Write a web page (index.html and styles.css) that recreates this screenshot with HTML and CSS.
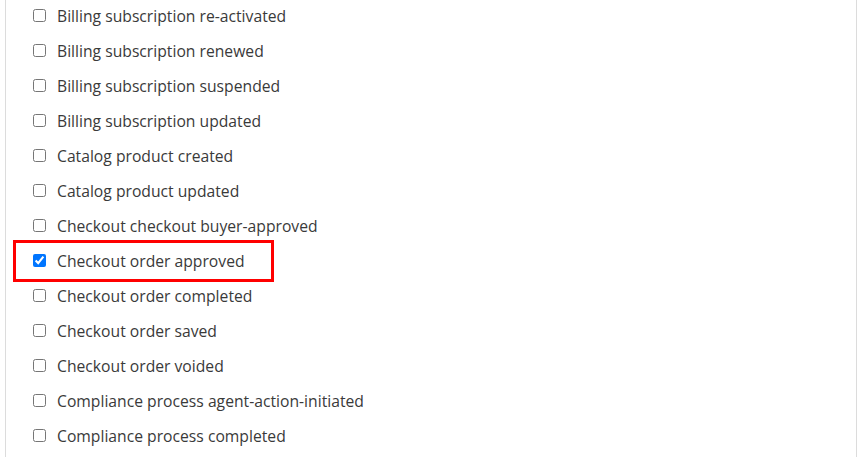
FILE: index.html
```html
<!DOCTYPE html>
<html>
<head>
<meta charset="utf-8">
<link rel="stylesheet" href="styles.css">
</head>
<body>
<div class="panel">
  <ul class="events">
    <li class="event"><label class="opt"><input type="checkbox"><span>Billing subscription re-activated</span></label></li>
    <li class="event"><label class="opt"><input type="checkbox"><span>Billing subscription renewed</span></label></li>
    <li class="event"><label class="opt"><input type="checkbox"><span>Billing subscription suspended</span></label></li>
    <li class="event"><label class="opt"><input type="checkbox"><span>Billing subscription updated</span></label></li>
    <li class="event"><label class="opt"><input type="checkbox"><span>Catalog product created</span></label></li>
    <li class="event"><label class="opt"><input type="checkbox"><span>Catalog product updated</span></label></li>
    <li class="event"><label class="opt"><input type="checkbox"><span>Checkout checkout buyer-approved</span></label></li>
    <li class="event highlighted"><label class="opt"><input type="checkbox" checked><span>Checkout order approved</span></label><span class="mark"></span></li>
    <li class="event"><label class="opt"><input type="checkbox"><span>Checkout order completed</span></label></li>
    <li class="event"><label class="opt"><input type="checkbox"><span>Checkout order saved</span></label></li>
    <li class="event"><label class="opt"><input type="checkbox"><span>Checkout order voided</span></label></li>
    <li class="event"><label class="opt"><input type="checkbox"><span>Compliance process agent-action-initiated</span></label></li>
    <li class="event"><label class="opt"><input type="checkbox"><span>Compliance process completed</span></label></li>
  </ul>
</div>
</body>
</html>
```
FILE: styles.css
```css
html, body {
  margin: 0;
  padding: 0;
  background: #fff;
}
body {
  font-family: "Open Sans", "Liberation Sans", sans-serif;
  color: #3a3a3a;
  overflow: hidden;
}
.panel {
  margin-left: 5px;
  width: 850px;
  height: 480px;
  border-left: 1px solid #dcdcdc;
  border-right: 1px solid #dcdcdc;
  margin-top: -2px;
}
.events {
  list-style: none;
  margin: 0;
  padding: 0 0 0 27px;
}
.event {
  position: relative;
  height: 35px;
  display: flex;
  align-items: center;
}
.opt {
  display: flex;
  align-items: center;
  gap: 11px;
  font-size: 15.7px;
}
.opt input {
  margin: 0;
  width: 13px;
  height: 13px;
}
.mark {
  position: absolute;
  left: -20px;
  top: -3px;
  width: 255px;
  height: 36px;
  border: 3px solid #ff0000;
  pointer-events: none;
}
```
